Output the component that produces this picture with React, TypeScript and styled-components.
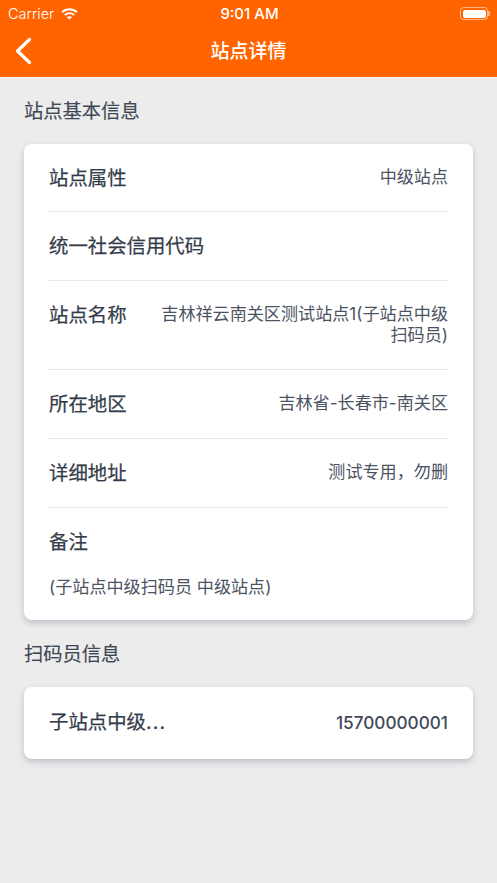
import React from 'react'
import styled, { createGlobalStyle } from 'styled-components'

const GlobalStyle = createGlobalStyle`
  html, body {
    margin: 0;
    padding: 0;
    background: #ececec;
    font-family: Inter, "Noto Sans CJK SC", "Noto Sans", sans-serif;
  }
`

const Page = styled.div`
  width: 497px;
  height: 883px;
  background: #ececec;
  overflow: hidden;
`

const Header = styled.header`
  height: 77px;
  background: #ff6400;
  color: #fff;
  border-bottom: 1px solid #f6f6f6;
  box-sizing: content-box;
`

const StatusBar = styled.div`
  height: 27px;
  display: grid;
  grid-template-columns: 1fr auto 1fr;
  align-items: center;
  padding: 0 9px 0 8px;
`

const Carrier = styled.div`
  display: flex;
  align-items: center;
  gap: 7px;
  font-size: 14.5px;
  font-weight: 300;
`

const Clock = styled.div`
  font-size: 15px;
  font-weight: 500;
  padding-left: 3px;
`

const Battery = styled.div`
  justify-self: end;
  width: 28px;
  height: 13px;
  box-sizing: border-box;
  border: 1px solid rgba(255, 255, 255, 0.55);
  border-radius: 3.5px;
  padding: 1.5px;
  position: relative;

  &::before {
    content: '';
    display: block;
    height: 100%;
    background: #fff;
    border-radius: 2px;
  }

  &::after {
    content: '';
    position: absolute;
    right: -3px;
    top: 3px;
    width: 2px;
    height: 5px;
    background: rgba(255, 255, 255, 0.55);
    border-radius: 0 1px 1px 0;
  }
`

const NavBar = styled.div`
  height: 50px;
  display: grid;
  grid-template-columns: 60px 1fr 60px;
  align-items: center;
  padding-bottom: 2px;
  box-sizing: border-box;
`

const BackButton = styled.div`
  padding-left: 14px;
  display: flex;
`

const Title = styled.h1`
  margin: 0 0 4px;
  text-align: center;
  font-size: 19px;
  font-weight: 500;
`

const Content = styled.main`
  padding: 0 24px;
`

const SectionTitle = styled.h2<{ $top: number; $bottom: number }>`
  margin: ${(p) => p.$top}px 0 ${(p) => p.$bottom}px;
  font-size: 19.3px;
  line-height: 26px;
  font-weight: 400;
  color: #3f4755;
  -webkit-text-stroke: 0.15px #3f4755;
`

const Card = styled.section`
  background: #fff;
  border-radius: 8px;
  padding: 0 24px;
  box-shadow: 0 3px 6px rgba(120, 130, 150, 0.4);
`

const Row = styled.div<{ $height: number; $top?: number; $last?: boolean }>`
  height: ${(p) => p.$height}px;
  box-sizing: border-box;
  display: flex;
  justify-content: space-between;
  gap: 30px;
  padding-top: ${(p) => p.$top ?? 21}px;
  border-bottom: ${(p) => (p.$last ? 'none' : '1px solid #e6e9f2')};
`

const Label = styled.div`
  flex: none;
  padding-left: 1px;
  font-size: 19.4px;
  line-height: 27px;
  font-weight: 400;
  color: #333c4a;
  -webkit-text-stroke: 0.25px #333c4a;
`

const Dots = styled.span`
  letter-spacing: 1.2px;
`

const Value = styled.div`
  font-size: 17.1px;
  line-height: 21px;
  padding: 1px 1px 0 0;
  color: #4c5463;
  text-align: right;
`

const Phone = styled(Value)`
  font-size: 17.2px;
  font-weight: 500;
  padding-top: 3px;
  color: #404958;
`

const NoteBlock = styled.div`
  padding: 21px 0 22px;
`

const NoteText = styled.div`
  margin-top: 19px;
  padding-left: 1px;
  font-size: 17.1px;
  line-height: 23px;
  color: #4c5463;
`

const rows = [
  { label: '站点属性', value: '中级站点', height: 68 },
  { label: '统一社会信用代码', value: '', height: 69 },
  { label: '站点名称', value: '吉林祥云南关区测试站点1(子站点中级扫码员)', height: 89 },
  { label: '所在地区', value: '吉林省-长春市-南关区', height: 69 },
  { label: '详细地址', value: '测试专用，勿删', height: 69 },
]

export default function App() {
  return (
    <Page>
      <GlobalStyle />
      <Header>
        <StatusBar>
          <Carrier>
            Carrier
            <svg width="17" height="12" viewBox="0 0 17 12" fill="none" stroke="#fff" strokeWidth="2">
              <path d="M1 4.2C5.4.2 11.6.2 16 4.2" />
              <path d="M3.8 7c2.7-2.4 6.7-2.4 9.4 0" />
              <path d="M8.5 11.6 5.9 9.2c1.5-1.2 3.7-1.2 5.2 0z" fill="#fff" stroke="none" />
            </svg>
          </Carrier>
          <Clock>9:01 AM</Clock>
          <Battery />
        </StatusBar>
        <NavBar>
          <BackButton>
            <svg width="20" height="28" viewBox="0 0 20 28" fill="none" stroke="#fff" strokeWidth="3.2" strokeLinecap="round" strokeLinejoin="round">
              <path d="M15.5 2.5 3.5 14l12 11.5" />
            </svg>
          </BackButton>
          <Title>站点详情</Title>
          <span />
        </NavBar>
      </Header>
      <Content>
        <SectionTitle $top={20} $bottom={20}>站点基本信息</SectionTitle>
        <Card>
          {rows.map((row) => (
            <Row key={row.label} $height={row.height}>
              <Label>{row.label}</Label>
              {row.value && <Value>{row.value}</Value>}
            </Row>
          ))}
          <NoteBlock>
            <Label>备注</Label>
            <NoteText>(子站点中级扫码员 中级站点)</NoteText>
          </NoteBlock>
        </Card>
        <SectionTitle $top={21} $bottom={20}>扫码员信息</SectionTitle>
        <Card>
          <Row $height={72} $top={22} $last>
            <Label>子站点中级<Dots>...</Dots></Label>
            <Phone>15700000001</Phone>
          </Row>
        </Card>
      </Content>
    </Page>
  )
}
